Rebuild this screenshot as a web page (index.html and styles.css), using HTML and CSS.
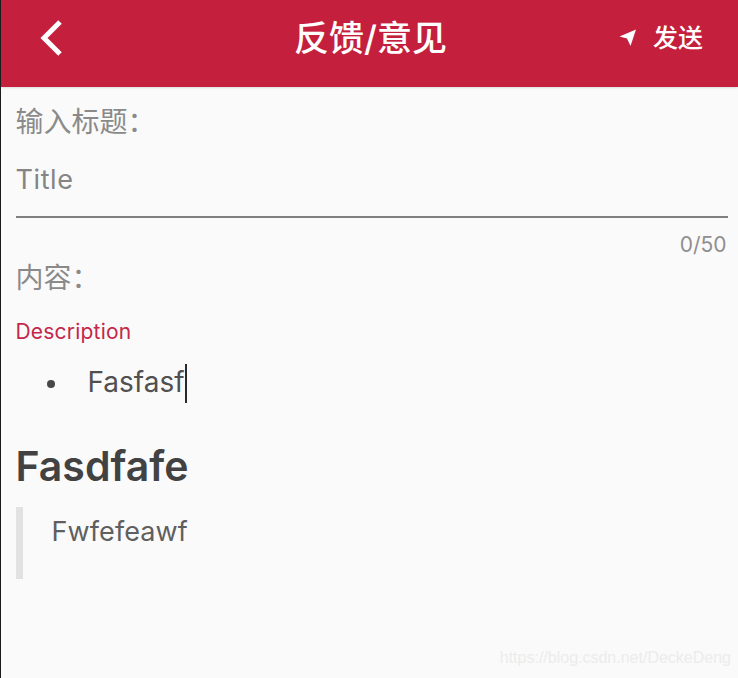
FILE: index.html
```html
<!DOCTYPE html>
<html lang="zh-CN">
<head>
<meta charset="utf-8">
<title>反馈/意见</title>
<link rel="stylesheet" href="styles.css">
</head>
<body>
<div class="screen">
  <header class="appbar">
    <div class="bar-side">
      <svg class="back" width="26" height="38" viewBox="0 0 26 38"><path d="M22 3 L6 19 L22 35" fill="none" stroke="#fff" stroke-width="5"/></svg>
    </div>
    <h1 class="title">反馈/意见</h1>
    <div class="bar-side send">
      <svg class="send-icon" width="18" height="18" viewBox="0 0 18 18"><path d="M0.5 7.5 L17 0.5 L11.5 17 L8 9.5 Z" fill="#fff"/></svg>
      <span class="send-label">发送</span>
    </div>
  </header>
  <main class="content">
    <div class="label label-title">输入标题：</div>
    <div class="field">Title</div>
    <div class="counter">0/50</div>
    <div class="label label-content">内容：</div>
    <div class="desc">Description</div>
    <div class="bullet-row"><span class="dot"></span><span class="bullet-text">Fasfasf</span><span class="caret"></span></div>
    <h2 class="heading">Fasdfafe</h2>
    <blockquote class="quote">Fwfefeawf</blockquote>
  </main>
  <div class="watermark">https://blog.csdn.net/DeckeDeng</div>
</div>
</body>
</html>
```
FILE: styles.css
```css
* { box-sizing: border-box; }
html, body { margin: 0; padding: 0; }
body {
  font-family: Inter, "Noto Sans CJK SC", sans-serif;
  background: #fafafa;
}
.screen {
  position: relative;
  width: 738px;
  height: 678px;
  overflow: hidden;
  border-left: 1px solid #1c1c1c;
  background: #fafafa;
  display: flex;
  flex-direction: column;
}
.appbar {
  height: 87px;
  flex: none;
  background: #c4203e;
  display: flex;
  align-items: center;
  padding: 0 35px 11px 37px;
  color: #fff;
  box-shadow: 0 1px 2px rgba(0,0,0,.12);
}
.bar-side { flex: 1 1 0; display: flex; align-items: center; }
.back { flex: none; }
.title {
  flex: none;
  margin: 0;
  font-size: 35px;
  font-weight: 500;
  line-height: 40px;
}
.send { justify-content: flex-end; }
.send-icon { margin-right: 16px; }
.send-label { font-size: 25px; font-weight: 500; line-height: 30px; }
.content { padding: 0 10px 0 14.5px; flex: 1; }
.label { font-size: 28px; line-height: 36px; color: #8a8a8a; }
.label-title { margin-top: 17px; }
.field {
  height: 74px;
  margin-top: 4px;
  padding-top: 18px;
  font-size: 27px;
  line-height: 36px;
  letter-spacing: .6px;
  color: #858585;
  border-bottom: 2px solid #7f7f7f;
}
.counter {
  text-align: right;
  font-size: 21px;
  line-height: 26px;
  margin-top: 14px;
  padding-right: 1.5px;
  color: #8f8f8f;
}
.label-content { margin-top: 2px; }
.desc { font-size: 21px; line-height: 26px; letter-spacing: .2px; color: #c4274a; margin-top: 23px; }
.bullet-row { display: flex; align-items: center; height: 40px; margin-top: 17px; }
.dot { width: 8px; height: 8px; border-radius: 50%; background: #484848; margin: 4px 33px 0 31px; }
.bullet-text { font-size: 28px; line-height: 36px; color: #505050; }
.caret { width: 2px; height: 39px; margin-top: 2px; background: #2a2a2a; }
.heading {
  margin: 39px 0 0;
  font-size: 41px;
  line-height: 50px;
  font-weight: 600;
  color: #424242;
}
.quote {
  margin: 16px 0 0;
  height: 72px;
  padding: 5px 0 0 29px;
  border-left: 7px solid #e2e2e2;
  font-size: 27px;
  line-height: 40px;
  letter-spacing: .1px;
  color: #5f5f5f;
}
.watermark {
  position: absolute;
  right: 7px;
  bottom: 10px;
  font-family: "Liberation Sans", sans-serif;
  font-size: 16px;
  line-height: 20px;
  color: #ececec;
}
```
